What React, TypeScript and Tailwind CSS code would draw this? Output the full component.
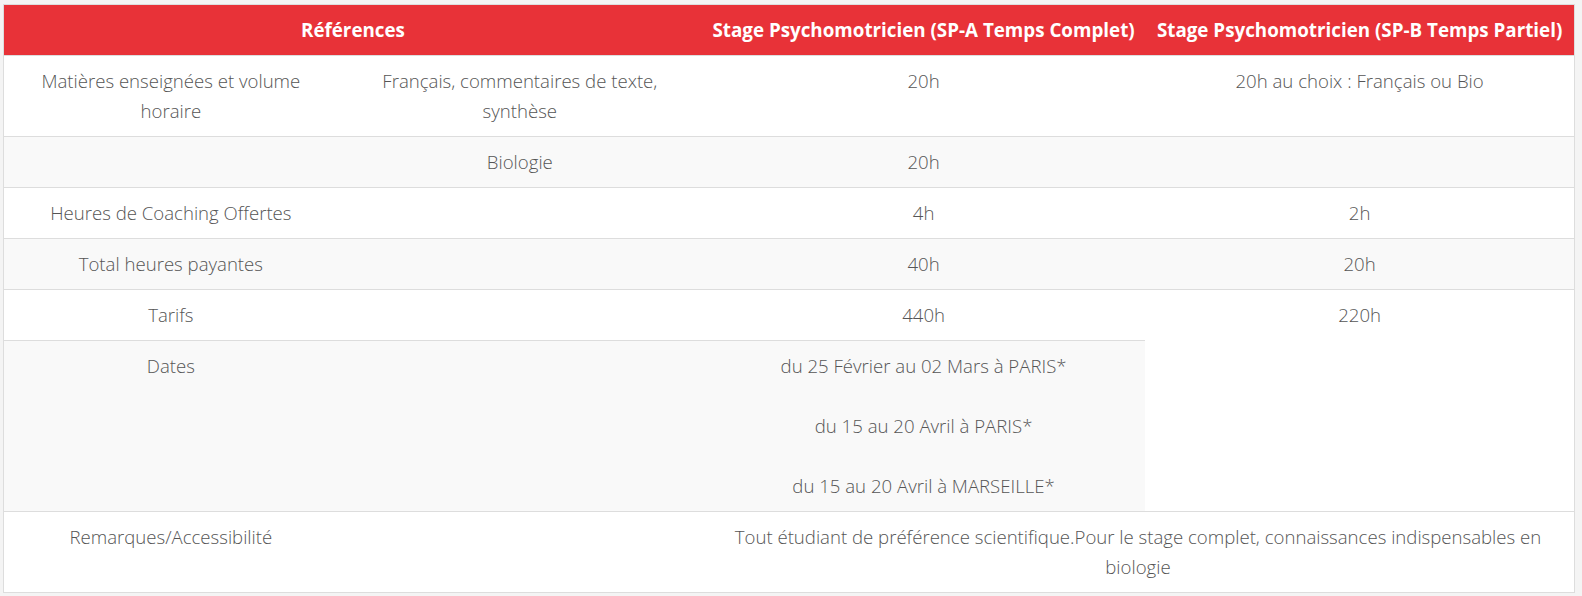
import React from 'react';

const cell = 'px-2.5 py-2.5 align-top text-center border-t border-[#dddddd]';
const grey = 'bg-[#f9f9f9]';

export default function App() {
  const rows: { cells: string[]; striped: boolean }[] = [
    { cells: ['Matières enseignées et volume horaire', 'Français, commentaires de texte, synthèse', '20h', '20h au choix : Français ou Bio'], striped: false },
    { cells: ['', 'Biologie', '20h', ''], striped: true },
    { cells: ['Heures de Coaching Offertes', '', '4h', '2h'], striped: false },
    { cells: ['Total heures payantes', '', '40h', '20h'], striped: true },
    { cells: ['Tarifs', '', '440h', '220h'], striped: false },
  ];

  return (
    <div
      className="min-h-screen bg-[#f4f4f4] pt-[4px] pl-[3px] pr-[7px]"
      style={{ fontFamily: '"Open Sans", "Liberation Sans", sans-serif' }}
    >
      <table className="w-[1572px] table-fixed border-collapse border border-[#dddddd] bg-white text-[18.6px] leading-[30px] font-light text-[#555555]">
        <colgroup>
          <col className="w-[334px]" />
          <col className="w-[364px]" />
          <col className="w-[443px]" />
          <col className="w-[429px]" />
        </colgroup>
        <thead>
          <tr className="bg-[#e83238] text-white font-bold text-[18.8px]">
            <th colSpan={2} className="px-2.5 py-2.5 text-center">Références</th>
            <th className="px-1 py-2.5 text-center whitespace-nowrap">Stage Psychomotricien (SP-A Temps Complet)</th>
            <th className="px-1 py-2.5 text-center whitespace-nowrap">Stage Psychomotricien (SP-B Temps Partiel)</th>
          </tr>
        </thead>
        <tbody>
          {rows.map((r, i) => (
            <tr key={i}>
              {r.cells.map((c, j) => (
                <td key={j} className={`${cell} ${r.striped ? grey : ''}`}>
                  {c}
                </td>
              ))}
            </tr>
          ))}
          <tr>
            <td className={`${cell} ${grey}`}>Dates</td>
            <td className={`${cell} ${grey}`}></td>
            <td className={`${cell} ${grey}`}>
              <div className="flex flex-col gap-[30px]">
                <p>du 25 Février au 02 Mars à PARIS*</p>
                <p>du 15 au 20 Avril à PARIS*</p>
                <p>du 15 au 20 Avril à MARSEILLE*</p>
              </div>
            </td>
          </tr>
          <tr>
            <td className={cell}>Remarques/Accessibilité</td>
            <td className={cell}></td>
            <td colSpan={2} className={cell}>
              Tout étudiant de préférence scientifique.Pour le stage complet, connaissances indispensables en biologie
            </td>
          </tr>
        </tbody>
      </table>
    </div>
  );
}
